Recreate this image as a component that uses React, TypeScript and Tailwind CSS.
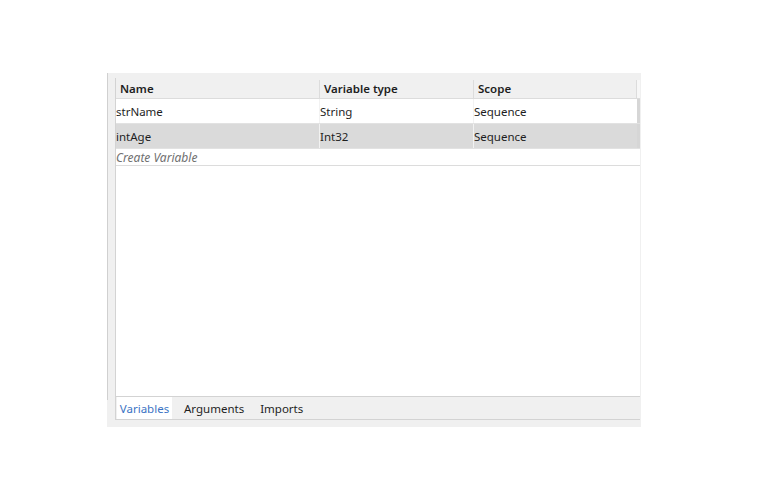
const rows = [
  { name: 'strName', type: 'String', scope: 'Sequence', selected: false },
  { name: 'intAge', type: 'Int32', scope: 'Sequence', selected: true },
];

function App() {
  return (
    <div className="h-[500px] w-[780px] bg-white pl-[107px] pt-[73px] font-['Noto_Sans',sans-serif] text-[11.5px] text-[#1e1e1e]">
      <div className="relative flex h-[354px] w-[534px] flex-col bg-[#f0f0f0] pb-[7px] pl-[8px] pr-[1px] pt-[5px]">
        {/* left splitter edge */}
        <div className="absolute left-0 top-0 h-[327px] w-px bg-[#d0d0d0]" />

        <div className="flex flex-1 flex-col border-b border-l border-[#d3d3d3] bg-white">
          {/* header */}
          <div className="flex h-[21px] border-b border-[#dcdcdc] bg-[#f0f0f0] pt-[2px] font-semibold">
            <div className="flex w-[204px] items-center border-r border-[#dcdcdc] pl-[4px]">Name</div>
            <div className="flex w-[154px] items-center border-r border-[#dcdcdc] pl-[4px]">Variable type</div>
            <div className="flex w-[163px] items-center border-r border-[#dcdcdc] pl-[4px]">Scope</div>
            <div className="flex-1 bg-[#f7f7f7]" />
          </div>

          {rows.map((r) => (
            <div
              key={r.name}
              className={`flex h-[25px] border-b border-[#e2e2e2] ${r.selected ? 'bg-[#dadada]' : 'bg-white'}`}
            >
              <div className="flex w-[204px] items-center border-r border-[#f2f2f2] pt-[2px]">{r.name}</div>
              <div className="flex w-[154px] items-center border-r border-[#f2f2f2] pt-[2px]">{r.type}</div>
              <div className="flex w-[163px] items-center pt-[2px]">{r.scope}</div>
              <div className="w-[3px] bg-[#d6d6d6]" />
              <div className="flex-1" />
            </div>
          ))}

          <div className="flex h-[17px] items-center border-b border-[#dcdcdc] pt-[1px] text-[12px] italic text-[#707070]">
            Create Variable
          </div>

          <div className="flex-1" />

          {/* tabs */}
          <div className="flex h-[23px] items-stretch border-t border-[#d3d3d3] bg-[#f0f0f0] pl-[1px]">
            <div className="flex w-[55px] items-center justify-center bg-white pt-[2px] text-[#3b73c4]">Variables</div>
            <div className="flex items-center pl-[12px] pr-[9px] pt-[2px]">Arguments</div>
            <div className="flex items-center pl-[7px] pt-[2px]">Imports</div>
          </div>
        </div>
      </div>
    </div>
  );
}

export default App;
